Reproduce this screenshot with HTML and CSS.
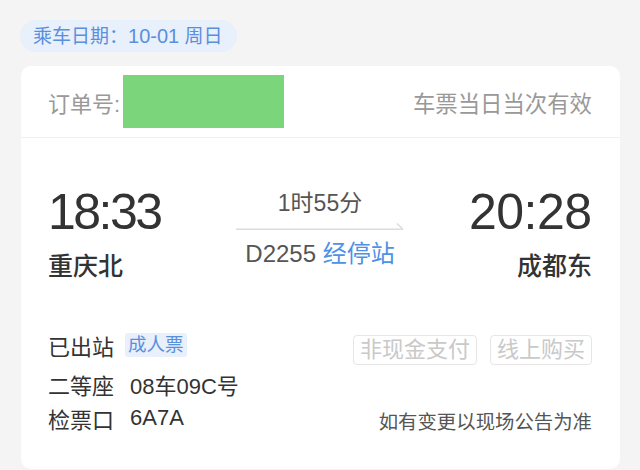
FILE: index.html
```html
<!DOCTYPE html>
<html lang="zh-CN">
<head>
    <meta charset="UTF-8">
    <title>车票详情</title>
    <link rel="stylesheet" href="styles.css">
</head>
<body>
  <div class="date-pill">乘车日期：<span class="pill-num">10-01</span> 周日</div>

  <div class="ticket">
    <div class="ticket-head">
      <div class="order">
        <span class="order-label">订单号:</span><span class="order-mask"></span>
      </div>
      <div class="valid">车票当日当次有效</div>
    </div>

    <div class="journey">
      <div class="stop">
        <div class="time time-start">18:33</div>
        <div class="station">重庆北</div>
      </div>
      <div class="train">
        <div class="duration">1时55分</div>
        <svg class="arrow" width="168" height="8" viewBox="0 0 168 8">
          <line x1="0" y1="6.25" x2="167" y2="6.25" stroke="#dcdcdc" stroke-width="1.5"/>
          <line x1="161" y1="0.5" x2="167" y2="6.25" stroke="#dcdcdc" stroke-width="1.5"/>
        </svg>
        <div class="code">D2255 <span class="stops">经停站</span></div>
      </div>
      <div class="stop stop-end">
        <div class="time time-end">20:28</div>
        <div class="station">成都东</div>
      </div>
    </div>

    <div class="details">
      <div class="row row-first">
        <div class="row-left">
          <span class="label">已出站</span><span class="tag">成人票</span>
        </div>
        <div class="chips">
          <span class="chip">非现金支付</span>
          <span class="chip">线上购买</span>
        </div>
      </div>
      <div class="row">
        <div class="row-left">
          <span class="label">二等座</span><span class="value">08车09C号</span>
        </div>
      </div>
      <div class="row">
        <div class="row-left">
          <span class="label">检票口</span><span class="value">6A7A</span>
        </div>
        <div class="note">如有变更以现场公告为准</div>
      </div>
    </div>
  </div>
</body>
</html>
```

FILE: styles.css
```css
body {
    margin: 0;
    background: #f4f4f4;
    font-family: "Liberation Sans", "Noto Sans CJK SC", sans-serif;
    color: #333;
}

.date-pill {
    display: inline-block;
    margin: 20px 0 0 20px;
    padding: 0 15px 0 13px;
    height: 32px;
    line-height: 32px;
    font-size: 19px;
    color: #5a8fdc;
    background: #e8f0fc;
    border-radius: 16px;
}
.pill-num {
    font-size: 20px;
}

.ticket {
    box-sizing: border-box;
    margin: 14px 20px 0 21px;
    height: 403px;
    background: #fff;
    border-radius: 10px;
}

/* order header */
.ticket-head {
    display: flex;
    align-items: center;
    justify-content: space-between;
    height: 71px;
    padding: 0 28px 0 27px;
    border-bottom: 1px solid #f0f0f0;
}
.order {
    display: flex;
    align-items: center;
}
.order-label {
    font-size: 22px;
    color: #999;
}
.valid {
    font-size: 22.4px;
    color: #999;
}
.order-mask {
    width: 161px;
    height: 53px;
    margin-left: 3px;
    background: #7bd57a;
}

/* times and stations */
.journey {
    display: grid;
    grid-template-columns: 1fr auto 1fr;
    padding: 49px 28px 0 27px;
}
.time {
    font-size: 50px;
    line-height: 50px;
    color: #333;
}
.time-start {
    letter-spacing: -2.5px;
}
.time-end {
    letter-spacing: -0.5px;
    padding-right: 0.5px;
}
.station {
    margin-top: 17px;
    font-size: 25px;
    line-height: 25px;
    font-weight: 500;
    color: #333;
}
.stop-end {
    text-align: right;
}

.train {
    display: flex;
    flex-direction: column;
    align-items: center;
    padding-top: 5px;
}
.duration {
    font-size: 23px;
    line-height: 23px;
    color: #555;
}
.arrow {
    display: block;
    margin-top: 8px;
}
.code {
    margin-top: 11px;
    font-size: 24px;
    line-height: 24px;
    color: #555;
}
.stops {
    color: #4e91e6;
}

/* seat info */
.details {
    padding: 49px 28px 0 27px;
}
.row {
    display: flex;
    align-items: center;
    justify-content: space-between;
    height: 34px;
}
.row-first {
    margin-bottom: 5px;
}
.row-left {
    display: flex;
    align-items: center;
}
.label {
    font-size: 22px;
    color: #333;
}
.value {
    margin-left: 16px;
    font-size: 22px;
    color: #333;
}
.tag {
    margin-left: 11px;
    padding: 0 3px;
    height: 24px;
    line-height: 24px;
    font-size: 18.5px;
    color: #5a8fdc;
    background: #e8f0fc;
    border-radius: 3px;
}
.chips {
    display: flex;
    gap: 13px;
    margin-top: 10px;
}
.chip {
    padding: 0 6px;
    height: 28px;
    line-height: 28px;
    font-size: 22px;
    color: #c9c9c9;
    border: 1px solid #e6e6e6;
    border-radius: 4px;
}
.note {
    margin-top: 5px;
    font-size: 19.4px;
    color: #555;
}
```
